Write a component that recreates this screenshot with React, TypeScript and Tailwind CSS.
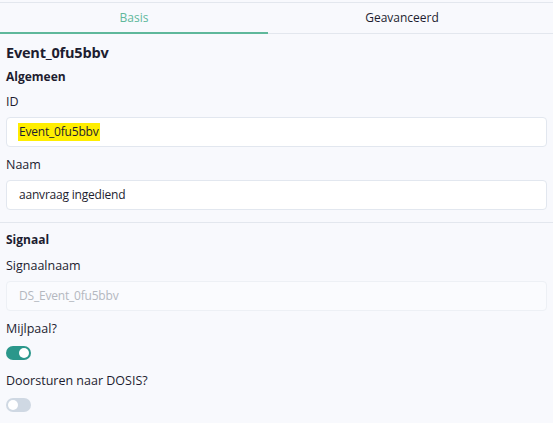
import React from "react";

function Toggle({ on }: { on: boolean }) {
  return (
    <div
      className={`relative w-[25px] h-[14px] rounded-full ${on ? "bg-[#2b978b]" : "bg-[#cfd8e3]"}`}
    >
      <div
        className={`absolute top-[2px] w-[10px] h-[10px] rounded-full bg-white ${on ? "left-[13px]" : "left-[2px]"}`}
      />
    </div>
  );
}

export default function App() {
  return (
    <div
      className="w-[553px] h-[423px] bg-[#f8f9fd] text-[#1d1d30] overflow-hidden"
      style={{ fontFamily: "'Segoe UI', 'Open Sans', 'Noto Sans', sans-serif" }}
    >
      <div className="h-[2px]" />
      <div className="flex border-t border-[#e3e7ee] border-b border-b-[#e3e7ee] h-[32px]">
        <div className="w-[268px] flex items-center justify-center text-[12px] text-[#5fb89b] border-b-2 border-[#5fb89b] -mb-px">
          Basis
        </div>
        <div className="w-[268px] flex items-center justify-center text-[12px] text-[#1d1d30]">
          Geavanceerd
        </div>
      </div>
      <div className="px-[6px]">
        <div className="text-[14.5px] font-bold leading-[20px] mt-[9px] tracking-[-0.2px]">Event_0fu5bbv</div>
        <div className="text-[12px] font-bold leading-[18px] mt-[5px]">Algemeen</div>
        <div className="text-[12.5px] leading-[18px] mt-[7px]">ID</div>
        <div className="mt-[6px] h-[30px] bg-white border border-[#e2e7ef] rounded-[4px] flex items-center px-[11px] text-[12px]">
          <span className="bg-[#ffee00] px-[1px] tracking-[-0.2px]">Event_0fu5bbv</span>
        </div>
        <div className="text-[12.5px] leading-[18px] mt-[9px]">Naam</div>
        <div className="mt-[6px] h-[30px] bg-white border border-[#e2e7ef] rounded-[4px] flex items-center px-[12px] text-[12px] tracking-[-0.2px]">
          aanvraag ingediend
        </div>
      </div>
      <div className="mt-[12px] border-t border-[#e3e7ee]" />
      <div className="px-[6px]">
        <div className="text-[12px] font-bold leading-[18px] mt-[8px]">Signaal</div>
        <div className="text-[12.5px] leading-[18px] mt-[8px]">Signaalnaam</div>
        <div className="mt-[6px] h-[30px] bg-[#fafbfe] border border-[#edf0f5] rounded-[4px] flex items-center px-[12px] text-[12px] text-[#b4b8c0] tracking-[-0.2px]">
          DS_Event_0fu5bbv
        </div>
        <div className="text-[12.5px] leading-[18px] mt-[9px]">Mijlpaal?</div>
        <div className="mt-[8px]">
          <Toggle on />
        </div>
        <div className="text-[12.5px] leading-[18px] mt-[12px]">Doorsturen naar DOSIS?</div>
        <div className="mt-[8px]">
          <Toggle on={false} />
        </div>
      </div>
    </div>
  );
}
